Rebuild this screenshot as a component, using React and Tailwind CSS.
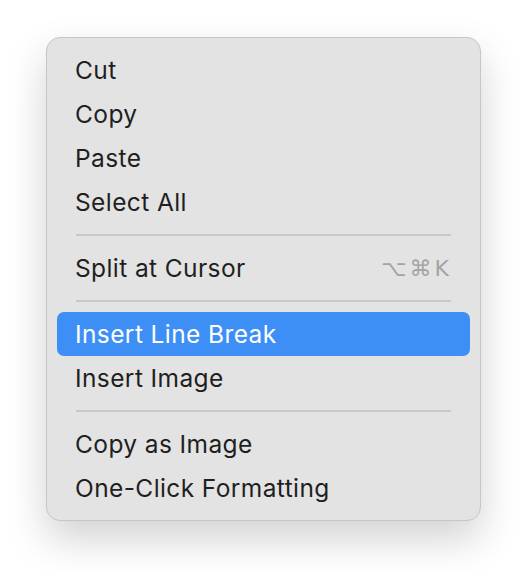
const groups = [
  [{ label: 'Cut' }, { label: 'Copy' }, { label: 'Paste' }, { label: 'Select All' }],
  [{ label: 'Split at Cursor', shortcut: '⌥⌘K' }],
  [{ label: 'Insert Line Break', active: true }, { label: 'Insert Image' }],
  [{ label: 'Copy as Image' }, { label: 'One-Click Formatting' }],
];

const MenuItem = ({ label, shortcut, active }) => (
  <div
    className={`flex h-[44px] items-center justify-between rounded-[7px] pl-[18px] pr-[18px] ${
      active ? 'bg-[#3d8ff6] text-white' : 'text-[#1f1f1f]'
    }`}
  >
    <span>{label}</span>
    {shortcut && (
      <span className="text-[#a3a3a3] tracking-[3px] font-['DejaVu_Sans',sans-serif] text-[22px]">
        {shortcut}
      </span>
    )}
  </div>
);

const App = () => {
  return (
    <div className="w-[526px] h-[574px] bg-white pt-[37px] pl-[46px]">
      <div className="w-[435px] rounded-[14px] border border-[#c6c6c6] bg-[#e3e3e3] px-[10px] pt-[10px] pb-[10px] shadow-[0_18px_40px_rgba(0,0,0,0.18)] font-['Inter',sans-serif] text-[24.5px] tracking-[0.4px]">
        {groups.map((items, i) => (
          <div key={i}>
            {i > 0 && (
              <div className="flex h-[22px] items-center px-[19px]">
                <div className="h-[2px] w-full bg-[#c8c8c8]" />
              </div>
            )}
            {items.map((item) => (
              <MenuItem key={item.label} {...item} />
            ))}
          </div>
        ))}
      </div>
    </div>
  );
};

export default App;
